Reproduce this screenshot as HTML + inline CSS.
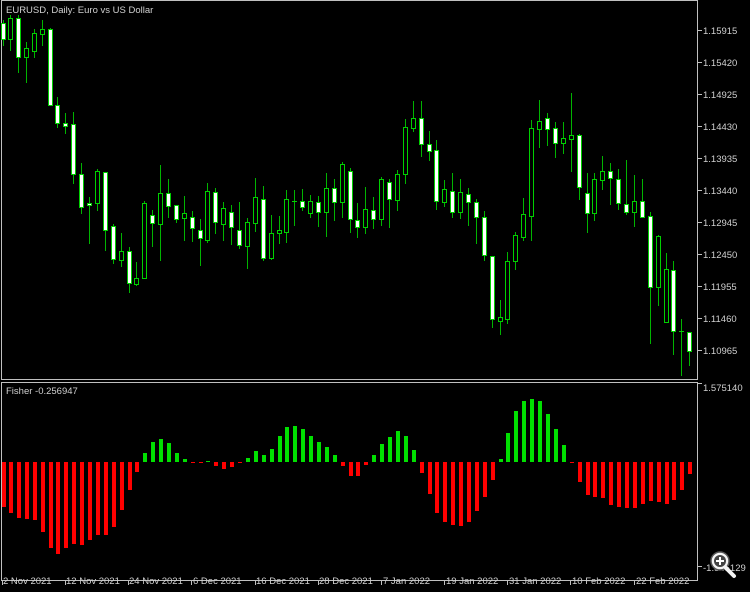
<!DOCTYPE html>
<html><head><meta charset="utf-8"><style>
html,body{margin:0;padding:0;background:#000;width:750px;height:592px;overflow:hidden}
svg{display:block}
text{font-family:"Liberation Sans",sans-serif;font-size:9.5px;fill:#d0d0d0}
</style></head><body>
<svg id="s" width="750" height="592" viewBox="0 0 750 592" shape-rendering="crispEdges">
<rect x="0" y="0" width="750" height="592" fill="#000"/>
<g fill="none" stroke="#c0c0c0" stroke-width="1">
<rect x="1.5" y="0.5" width="696" height="379"/>
<rect x="1.5" y="382.5" width="696" height="198"/>
</g>
<g id="ticks" fill="#c0c0c0"></g>
<g id="c"></g>
<g id="h"></g>
<text x="6" y="13">EURUSD, Daily:  Euro vs US Dollar</text>
<text x="6" y="394">Fisher -0.256947</text>
<g id="pl"></g>
<text x="703" y="391">1.575140</text>
<text x="703" y="571">-1.545129</text>
<g id="dl"></g>
<g>
<circle cx="720" cy="561" r="9" fill="#f4f4f4" stroke="#555" stroke-width="1.5" shape-rendering="auto"/>
<line x1="726" y1="568" x2="734" y2="576" stroke="#f4f4f4" stroke-width="4" stroke-linecap="round" shape-rendering="auto"/>
<circle cx="720" cy="561" r="6" fill="#444" shape-rendering="auto"/>
<rect x="716" y="560" width="8" height="2" fill="#fff"/>
<rect x="719" y="557" width="2" height="8" fill="#fff"/>
</g>
</svg>
<script>
var NS="http://www.w3.org/2000/svg";
function R(p,x,y,w,h,f){var r=document.createElementNS(NS,"rect");r.setAttribute("x",x);r.setAttribute("y",y);r.setAttribute("width",w);r.setAttribute("height",Math.max(h,1));r.setAttribute("fill",f);p.appendChild(r);}
function T(p,x,y,s){var t=document.createElementNS(NS,"text");t.setAttribute("x",x);t.setAttribute("y",y);t.textContent=s;p.appendChild(t);}
var C=[[3,23,39,20,45,1],[10,18,39,15,50,0],[18,18,57,15,72,1],[26,48,57,42,82,0],[34,33,51,29,57,0],[42,29,34,20,45,0],[50,29,105,28,105,1],[57,105,123,97,127,1],[65,123,126,113,133,1],[73,124,174,112,183,1],[81,174,207,163,213,1],[89,203,205,197,243,1],[97,171,203,169,210,0],[105,172,230,172,250,1],[113,226,259,224,263,1],[121,251,260,233,266,0],[129,251,283,247,292,1],[136,278,284,262,285,0],[144,203,278,201,278,0],[152,215,223,210,246,1],[160,193,224,165,260,0],[168,193,206,179,217,1],[176,205,219,205,222,1],[184,213,218,196,240,0],[192,217,228,211,241,1],[200,230,238,219,265,1],[207,191,240,183,242,0],[215,192,222,188,233,1],[223,208,224,202,240,0],[231,212,227,205,244,1],[239,230,245,202,248,1],[247,222,246,218,268,0],[255,197,223,178,231,0],[263,199,258,186,260,1],[271,233,258,215,259,0],[279,230,233,216,243,0],[286,199,232,190,242,0],[294,201,201,190,225,0],[302,201,207,189,210,1],[310,201,213,195,217,0],[318,202,212,196,226,1],[326,188,212,173,236,0],[334,188,202,179,220,1],[342,164,202,162,217,0],[350,171,219,168,232,1],[357,220,227,203,237,1],[365,209,227,187,233,0],[373,210,219,197,228,1],[381,179,219,177,225,0],[389,182,199,179,227,1],[397,174,200,170,210,0],[405,127,174,119,183,0],[413,118,128,101,131,0],[421,118,144,101,156,1],[429,144,151,131,160,1],[436,150,201,140,209,1],[444,189,202,180,206,0],[452,191,212,173,217,1],[460,192,212,179,218,0],[468,194,202,188,225,1],[476,202,217,199,243,1],[484,217,255,211,260,1],[492,256,319,256,327,1],[500,317,321,300,334,0],[507,261,319,252,323,0],[515,235,261,232,269,0],[523,214,237,198,240,0],[531,128,216,120,240,0],[539,121,129,100,147,0],[547,118,129,113,145,1],[555,128,143,122,157,1],[563,138,143,122,153,0],[571,135,139,93,171,0],[579,135,187,134,199,1],[587,193,213,173,232,1],[594,179,213,173,220,0],[602,171,180,156,189,0],[610,171,178,163,204,1],[618,179,203,169,209,1],[626,204,212,160,214,1],[634,201,212,175,226,0],[642,201,217,179,217,1],[650,216,287,212,343,1],[658,236,287,235,305,0],[666,269,322,253,322,0],[673,270,331,261,354,1],[681,331,331,319,375,0],[689,332,351,332,365,1]];
var H=[507,513,518,519,520,532,548,554,548,544,545,540,535,535,527,510,490,472,453,442,439,443,453,459,463,463,461,466,469,467,463,458,451,455,449,436,427,426,429,436,442,447,455,466,476,476,465,455,444,437,431,436,450,473,494,513,522,525,526,522,511,497,480,459,433,411,401,399,401,414,429,445,463,482,495,497,498,505,507,508,508,504,501,502,504,500,490,474];
var c=document.getElementById("c"),h=document.getElementById("h");
C.forEach(function(d){var x=d[0],t=d[1],b=d[2];
R(c,x,d[3],1,d[4]-d[3]+1,"#00b400");
R(c,x-2,t,5,b-t+1,"#00d000");
if(b-t>=2)R(c,x-1,t+1,3,b-t-1,d[5]?"#ffffff":"#000");});
var Z=462;
C.forEach(function(d,i){var x=d[0]-1,y=H[i];
if(i==24||i==25)y=463; if(i==26)y=461;
if(y<Z){R(h,x,y,4,Z-y,"#00e000");}else{R(h,x,Z,4,Math.max(y-Z,1),"#ff0000");}});
var pl=document.getElementById("pl"),tk=document.getElementById("ticks");
var P=["1.15915","1.15420","1.14925","1.14430","1.13935","1.13440","1.12945","1.12450","1.11955","1.11460","1.10965"];
P.forEach(function(s,i){var y=30+i*32;R(tk,698,y,4,1,"#c0c0c0");T(pl,703,y+4,s);});
R(tk,698,383,4,1,"#c0c0c0");R(tk,698,566,4,1,"#c0c0c0");
var D=[["2 Nov 2021",3,2],["12 Nov 2021",66,65],["24 Nov 2021",129,128],["6 Dec 2021",193,191],["16 Dec 2021",256,255],["28 Dec 2021",319,318],["7 Jan 2022",383,381],["19 Jan 2022",446,444],["31 Jan 2022",509,507],["10 Feb 2022",572,570],["22 Feb 2022",636,634]];
var dl=document.getElementById("dl");
D.forEach(function(d){R(tk,d[2],581,1,4,"#c0c0c0");T(dl,d[1],584,d[0]);});
</script>
</body></html>
